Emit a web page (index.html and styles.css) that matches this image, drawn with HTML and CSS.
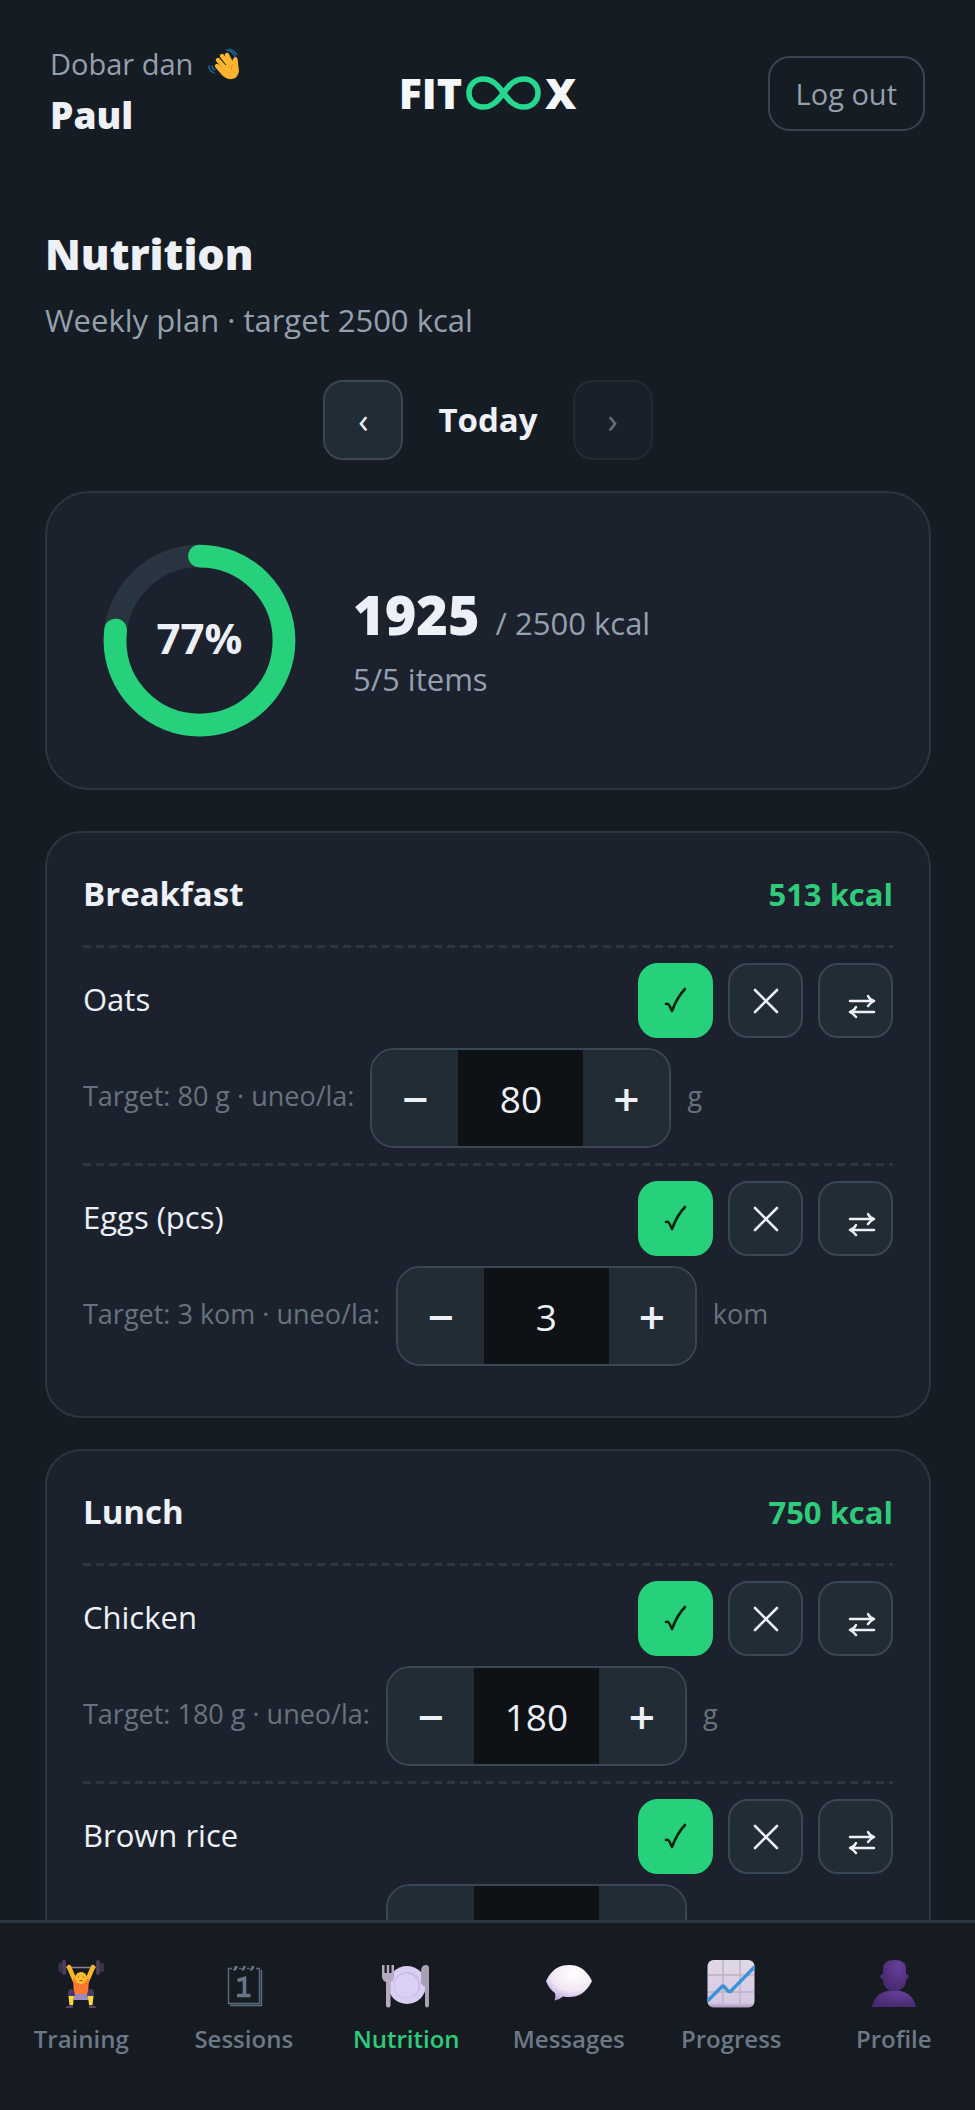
FILE: index.html
```html
<!DOCTYPE html>
<html lang="en">
<head>
    <meta charset="UTF-8">
    <meta name="viewport" content="width=device-width, initial-scale=1.0">
    <title>Nutrition</title>
    <link rel="stylesheet" href="styles.css">
</head>
<body>
    <!-- shared button icons -->
    <svg class="sprite" aria-hidden="true">
        <symbol id="check" viewBox="0 0 71 71">
            <path d="M26 39 C28 38 29 39 32 46 C35 38 39 30 45 24" fill="none" stroke="currentColor" stroke-width="2.6" stroke-linecap="round" stroke-linejoin="round"/>
        </symbol>
        <symbol id="cross" viewBox="0 0 71 71">
            <path d="M25 25 L47 47 M47 25 L25 47" fill="none" stroke="currentColor" stroke-width="2.6" stroke-linecap="round"/>
        </symbol>
        <symbol id="swap" viewBox="0 0 71 71">
            <path d="M30 36 H54 M31 47 H54 M48 31 Q50 35 54 36 Q50 38 48 41 M36 42 Q34 46 30 47 Q34 49 36 52" fill="none" stroke="currentColor" stroke-width="2.5" stroke-linecap="round" stroke-linejoin="round"/>
        </symbol>
    </svg>

    <div class="app">
        <div class="content">
            <header class="topbar">
                <div class="greeting">
                    <p class="hello">Dobar dan
                        <svg class="wave" viewBox="0 0 32 32" aria-hidden="true">
                            <path d="M19 2 Q25 3 27 9 M22 1 Q27 3 29 7 M1 18 Q1 23 6 25 M4 18 Q4 21 7 22" fill="none" stroke="#1f6fa8" stroke-width="1.3" stroke-linecap="round"/>
                            <path d="M9 18 L14 23 M10 12 L17 20 M14 8 L21 17 M19 7 L24 17" fill="none" stroke="#fcb62f" stroke-width="4.4" stroke-linecap="round"/>
                            <path d="M12 20 L24 14 Q25 9 28 9 Q30 10 30 15 L31 23 Q30 30 24 31 Q18 32 13 26 L9 21 Z" fill="#fdb32e"/>
                            <path d="M25 16 Q22 19 24 22" fill="none" stroke="#e8892a" stroke-width="1"/>
                        </svg>
                    </p>
                    <p class="name">Paul</p>
                </div>
                <div class="logo">
                    <span>FIT</span>
                    <svg class="loop" viewBox="0 0 75 34" aria-hidden="true">
                        <path d="M37.5 17 C31 8 26 3 17 3 C9 3 3 9 3 17 C3 25 9 31 17 31 C26 31 31 26 37.5 17 C44 8 49 3 58 3 C66 3 72 9 72 17 C72 25 66 31 58 31 C49 31 44 26 37.5 17 Z" fill="none" stroke="#25d78f" stroke-width="5.6"/>
                    </svg>
                    <span>X</span>
                </div>
                <button class="logout" type="button">Log out</button>
            </header>

            <main>
                <h1>Nutrition</h1>
                <p class="subtitle">Weekly plan · target 2500 kcal</p>

                <div class="day-nav">
                    <button class="day-btn" type="button" aria-label="Previous day">‹</button>
                    <span class="day">Today</span>
                    <button class="day-btn" type="button" aria-label="Next day" disabled>›</button>
                </div>

                <section class="card summary">
                    <div class="ring">
                        <svg viewBox="0 0 120 120" aria-hidden="true">
                            <circle class="ring-track" cx="60" cy="60" r="52"/>
                            <circle class="ring-value" cx="60" cy="60" r="52" pathLength="100" stroke-dasharray="77 100" transform="rotate(-90 60 60)"/>
                        </svg>
                        <span class="ring-text">77%</span>
                    </div>
                    <div class="totals">
                        <p class="total"><strong>1925</strong> / 2500 kcal</p>
                        <p class="items">5/5 items</p>
                    </div>
                </section>

                <section class="card meal">
                    <div class="meal-head">
                        <h2>Breakfast</h2>
                        <span class="kcal">513 kcal</span>
                    </div>
                    <div class="food">
                        <div class="food-top">
                            <span class="food-name">Oats</span>
                            <button class="act done" type="button" aria-label="Eaten"><svg><use href="#check"/></svg></button>
                            <button class="act" type="button" aria-label="Skip"><svg><use href="#cross"/></svg></button>
                            <button class="act" type="button" aria-label="Swap"><svg><use href="#swap"/></svg></button>
                        </div>
                        <div class="amount">
                            <label for="oats">Target: 80 g · uneo/la:</label>
                            <div class="stepper">
                                <button type="button" aria-label="Less">−</button>
                                <input id="oats" type="text" inputmode="numeric" value="80">
                                <button type="button" aria-label="More">+</button>
                            </div>
                            <span class="unit">g</span>
                        </div>
                    </div>
                    <div class="food">
                        <div class="food-top">
                            <span class="food-name">Eggs (pcs)</span>
                            <button class="act done" type="button" aria-label="Eaten"><svg><use href="#check"/></svg></button>
                            <button class="act" type="button" aria-label="Skip"><svg><use href="#cross"/></svg></button>
                            <button class="act" type="button" aria-label="Swap"><svg><use href="#swap"/></svg></button>
                        </div>
                        <div class="amount">
                            <label for="eggs">Target: 3 kom · uneo/la:</label>
                            <div class="stepper">
                                <button type="button" aria-label="Less">−</button>
                                <input id="eggs" type="text" inputmode="numeric" value="3">
                                <button type="button" aria-label="More">+</button>
                            </div>
                            <span class="unit">kom</span>
                        </div>
                    </div>
                </section>

                <section class="card meal">
                    <div class="meal-head">
                        <h2>Lunch</h2>
                        <span class="kcal">750 kcal</span>
                    </div>
                    <div class="food">
                        <div class="food-top">
                            <span class="food-name">Chicken</span>
                            <button class="act done" type="button" aria-label="Eaten"><svg><use href="#check"/></svg></button>
                            <button class="act" type="button" aria-label="Skip"><svg><use href="#cross"/></svg></button>
                            <button class="act" type="button" aria-label="Swap"><svg><use href="#swap"/></svg></button>
                        </div>
                        <div class="amount">
                            <label for="chicken">Target: 180 g · uneo/la:</label>
                            <div class="stepper">
                                <button type="button" aria-label="Less">−</button>
                                <input id="chicken" type="text" inputmode="numeric" value="180">
                                <button type="button" aria-label="More">+</button>
                            </div>
                            <span class="unit">g</span>
                        </div>
                    </div>
                    <div class="food">
                        <div class="food-top">
                            <span class="food-name">Brown rice</span>
                            <button class="act done" type="button" aria-label="Eaten"><svg><use href="#check"/></svg></button>
                            <button class="act" type="button" aria-label="Skip"><svg><use href="#cross"/></svg></button>
                            <button class="act" type="button" aria-label="Swap"><svg><use href="#swap"/></svg></button>
                        </div>
                        <div class="amount">
                            <label for="rice">Target: 180 g · uneo/la:</label>
                            <div class="stepper">
                                <button type="button" aria-label="Less">−</button>
                                <input id="rice" type="text" inputmode="numeric" value="180">
                                <button type="button" aria-label="More">+</button>
                            </div>
                            <span class="unit">g</span>
                        </div>
                    </div>
                </section>
            </main>
        </div>

        <nav class="tabs">
            <a href="#">
                <svg viewBox="0 0 48 48" aria-hidden="true">
                    <path d="M7 7.500 H41" stroke="#8b8391" stroke-width="1.600"/>
                    <rect x="5" y="0" width="4" height="15" rx="2" fill="#4d3d5c"/>
                    <rect x="1.500" y="2.500" width="4" height="10" rx="2" fill="#3d3049"/>
                    <rect x="39" y="0" width="4" height="15" rx="2" fill="#4d3d5c"/>
                    <rect x="43" y="2.500" width="4" height="10" rx="2" fill="#3d3049"/>
                    <path d="M12 7 L18 21 M36 7 L30 21" stroke="#fdb52c" stroke-width="4.500" stroke-linecap="round"/>
                    <path d="M16 18 Q24 25 32 18 L31 35 H17 Z" fill="#ff7a2f"/>
                    <circle cx="24" cy="18" r="6" fill="#ffbd2e"/>
                    <path d="M21 17 h1 M26 17 h1 M22.500 21 q1.500 -1.500 3 0" stroke="#8a4a1b" stroke-width="1" fill="none"/>
                    <path d="M16 34 H32 V40 H17 Z" fill="#9d8bbd"/>
                    <path d="M11 33 Q11 29 15 29 Q18 30 18 36 H11 Z M37 33 Q37 29 33 29 Q30 30 30 36 H37 Z" fill="#4a3a63"/>
                    <path d="M11.500 36 H17 L16 45 H12.500 Z M36.500 36 H31 L32 45 H35.500 Z" fill="#ffd93b"/>
                    <path d="M8 48 Q10 45 16 45 V48 Z M40 48 Q38 45 32 45 V48 Z" fill="#54416e"/>
                </svg>
                Training
            </a>
            <a href="#">
                <svg viewBox="0 0 48 48" aria-hidden="true">
                    <path d="M12 8.500 H8.500 V43.500 H39.500 V8.500 H36 M19 8.500 H21.500 M27 8.500 H29.500 M10 45.500 H41.500 V10" fill="none" stroke="#5c6b7b" stroke-width="1.400"/>
                    <path d="M13 9.500 Q15 10 15.500 6 M17 6 Q16.500 10 14 10 M21.500 9.500 Q23.500 10 24 6 M25 6 Q24.500 10 22 10 M30 9.500 Q32 10 32.500 6 M33.500 6 Q33 10 30.500 10" fill="none" stroke="#66758a" stroke-width="1.600"/>
                    <path d="M17.500 20.500 L24.500 18.500 V35 M17 35.500 H30.500" fill="none" stroke="#66758a" stroke-width="3.600"/>
                </svg>
                Sessions
            </a>
            <a href="#" class="active">
                <svg viewBox="0 0 48 48" aria-hidden="true">
                    <circle cx="25" cy="25" r="19" fill="#d9cdf2"/>
                    <circle cx="25" cy="25" r="13" fill="#c4b7e4"/>
                    <circle cx="24.500" cy="25.500" r="12" fill="#dccff5"/>
                    <path d="M0 5 H2.500 V13 H4.800 V5 H7.200 V13 H9.500 V5 H12 V15 Q12 21 8.500 22 V45 Q8.500 47.500 6 47.500 Q4 47.500 4 45 V22 Q0 21 0 16 Z" fill="#b4a9bf"/>
                    <path d="M47 8 Q47 5 43.500 5 Q39 5 39 12 V24 L43 27 V45 Q43 47.500 45 47.500 Q47 47.500 47 45 Z" fill="#aaa0b5"/>
                </svg>
                Nutrition
            </a>
            <a href="#">
                <svg viewBox="0 0 48 48" aria-hidden="true">
                    <defs>
                        <radialGradient id="bubble" cx="60%" cy="25%" r="80%">
                            <stop offset="0" stop-color="#ffffff"/>
                            <stop offset="0.600" stop-color="#f1e7f5"/>
                            <stop offset="1" stop-color="#b9a5e0"/>
                        </radialGradient>
                    </defs>
                    <path d="M24 5 C34 5 41 9 47 21 C41 33 34 37 24 37 Q21 37 18 36.500 Q14 40 9.500 40.500 Q11 37 10 33 Q4 29 1 21 C7 9 14 5 24 5 Z" fill="url(#bubble)"/>
                </svg>
                Messages
            </a>
            <a href="#">
                <svg viewBox="0 0 48 48" aria-hidden="true">
                    <defs>
                        <linearGradient id="paper" x1="0" y1="0" x2="0" y2="1">
                            <stop offset="0" stop-color="#e0d8e6"/>
                            <stop offset="0.900" stop-color="#d5c8e4"/>
                            <stop offset="1" stop-color="#a993bb"/>
                        </linearGradient>
                    </defs>
                    <rect x="0.500" y="0" width="47" height="47.500" rx="6" fill="url(#paper)"/>
                    <path d="M16 0 V47 M33 0 V47 M1 15 H47 M1 32 H47" stroke="#bdb3c3" stroke-width="1.400"/>
                    <path d="M0.500 41 L15 26.500 Q16 25.500 17 26.500 L21 31 Q22.500 32 24 31 L47.500 7" fill="none" stroke="#3c92d6" stroke-width="3.400"/>
                </svg>
                Progress
            </a>
            <a href="#">
                <svg viewBox="0 0 48 48" aria-hidden="true">
                    <defs>
                        <radialGradient id="person" cx="65%" cy="20%" r="80%">
                            <stop offset="0" stop-color="#663f98"/>
                            <stop offset="1" stop-color="#472a70"/>
                        </radialGradient>
                    </defs>
                    <circle cx="13" cy="16.500" r="2.600" fill="#4e2f79"/>
                    <circle cx="36" cy="16.500" r="2.600" fill="#4e2f79"/>
                    <path d="M2 47 Q5 31 24 30 Q43 31 46 47 Z" fill="url(#person)"/>
                    <path d="M13 9 Q13 0 24.500 0 Q36 0 36 9 V20 Q36 30 24.500 31 Q13 30 13 20 Z" fill="url(#person)"/>
                </svg>
                Profile
            </a>
        </nav>
    </div>
</body>
</html>
```
FILE: styles.css
```css
* {
    box-sizing: border-box;
}

body {
    margin: 0;
    background: #161c23;
    color: #edf1f7;
    font-family: "Open Sans", "Noto Sans", sans-serif;
}

h1, h2, p {
    margin: 0;
}

button, input {
    font-family: inherit;
    color: inherit;
    margin: 0;
    padding: 0;
}

button {
    cursor: pointer;
}

.sprite {
    display: none;
}

.app {
    display: flex;
    flex-direction: column;
    height: 100vh;
}

.content {
    flex: 1;
    min-height: 0;
    overflow-y: auto;
    scrollbar-width: none;
}

/* top bar */
.topbar {
    display: grid;
    grid-template-columns: 1fr auto 1fr;
    align-items: center;
    padding: 44px 50px 0;
}

.hello {
    display: flex;
    align-items: center;
    gap: 15px;
    font-size: 29px;
    line-height: 40px;
    color: #94a0ad;
}

.wave {
    width: 32px;
    height: 32px;
}

.name {
    margin-top: 4px;
    font-size: 37px;
    font-weight: 800;
    line-height: 54px;
}

.logo {
    display: flex;
    align-items: center;
    gap: 4px;
    font-size: 43px;
    font-weight: 800;
    line-height: 60px;
    color: #f4f7fa;
}

.loop {
    width: 75px;
    height: 34px;
}

.logout {
    justify-self: end;
    height: 75px;
    padding: 0 26px;
    border: 2px solid #394552;
    border-radius: 22px;
    background: none;
    color: #94a0ad;
    font-size: 29px;
}

main {
    padding: 82px 44px 32px 45px;
}

h1 {
    font-size: 43px;
    font-weight: 800;
    line-height: 60px;
}

.subtitle {
    margin-top: 14px;
    font-size: 31px;
    line-height: 44px;
    color: #94a0ad;
}

/* day switcher */
.day-nav {
    display: flex;
    justify-content: center;
    align-items: center;
    gap: 35px;
    margin: 38px 0 31px;
}

.day-btn {
    width: 80px;
    height: 80px;
    border: 2px solid #394653;
    border-radius: 20px;
    background: #222c35;
    font-size: 34px;
}

.day-btn:disabled {
    border-color: #232a34;
    background: #1a2029;
    color: #687078;
}

.day {
    font-size: 33px;
    font-weight: 700;
    line-height: 48px;
}

.card {
    border: 2px solid #2b3641;
    border-radius: 36px;
    background: #1c222d;
}

/* calories summary */
.summary {
    display: flex;
    align-items: center;
    gap: 56px;
    padding: 50px 55px;
    border-radius: 44px;
}

.ring {
    display: grid;
    place-items: center;
    width: 195px;
}

.ring > * {
    grid-area: 1 / 1;
}

.ring svg {
    display: block;
    width: 100%;
}

.ring-track, .ring-value {
    fill: none;
    stroke: #2a3542;
    stroke-width: 14;
}

.ring-value {
    stroke: #27d17c;
    stroke-linecap: round;
}

.ring-text {
    padding-bottom: 6px;
    font-size: 42px;
    font-weight: 700;
}

.total {
    font-size: 31px;
    line-height: 68px;
    color: #94a0ad;
}

.total strong {
    margin-right: 8px;
    font-size: 54px;
    font-weight: 800;
    color: #edf1f7;
}

.items {
    font-size: 31px;
    line-height: 44px;
    color: #94a0ad;
}

/* meals */
.meal {
    margin-top: 31px;
    padding: 35px 36px;
}

.summary + .meal {
    margin-top: 41px;
}

.meal-head {
    display: flex;
    justify-content: space-between;
    align-items: center;
    padding-bottom: 25px;
    line-height: 52px;
}

h2 {
    font-size: 33px;
    font-weight: 700;
}

.kcal {
    font-size: 31px;
    font-weight: 700;
    color: #2fcb7a;
}

.food {
    padding: 18px 0 15px;
    background: repeating-linear-gradient(90deg, #2b3641 0 8px, transparent 8px 13px) top / 100% 3px no-repeat;
}

.food-top {
    display: flex;
    align-items: center;
    gap: 15px;
}

.food-name {
    flex: 1;
    padding-bottom: 4px;
    font-size: 31px;
}

.act {
    width: 75px;
    height: 75px;
    border: 2px solid #394653;
    border-radius: 20px;
    background: #222c35;
}

.act svg {
    display: block;
    width: 71px;
    height: 71px;
}

.act.done {
    border-color: #27d17c;
    background: #27d17c;
    color: #06210f;
}

.amount {
    display: flex;
    align-items: center;
    gap: 16px;
    margin-top: 10px;
    font-size: 27px;
    color: #67727e;
}

.amount label, .unit {
    padding-bottom: 6px;
}

.stepper {
    display: flex;
    height: 100px;
    border: 2px solid #394653;
    border-radius: 24px;
    overflow: hidden;
    color: #edf1f7;
}

.stepper button {
    width: 86px;
    border: 0;
    background: #222c35;
    font-size: 46px;
    font-weight: 600;
}

.stepper input {
    width: 125px;
    border: 0;
    border-radius: 0;
    background: #0e1115;
    font-size: 37px;
    text-align: center;
}

/* bottom tabs */
.tabs {
    display: flex;
    border-top: 3px solid #2b3641;
    padding: 37px 0 48px;
    background: #161b22;
}

.tabs a {
    flex: 1;
    display: flex;
    flex-direction: column;
    align-items: center;
    gap: 8px;
    color: #6b7886;
    font-size: 24px;
    font-weight: 600;
    line-height: 46px;
    text-decoration: none;
}

.tabs svg {
    width: 48px;
    height: 48px;
}

.tabs .active {
    color: #2fcb7a;
}
```
